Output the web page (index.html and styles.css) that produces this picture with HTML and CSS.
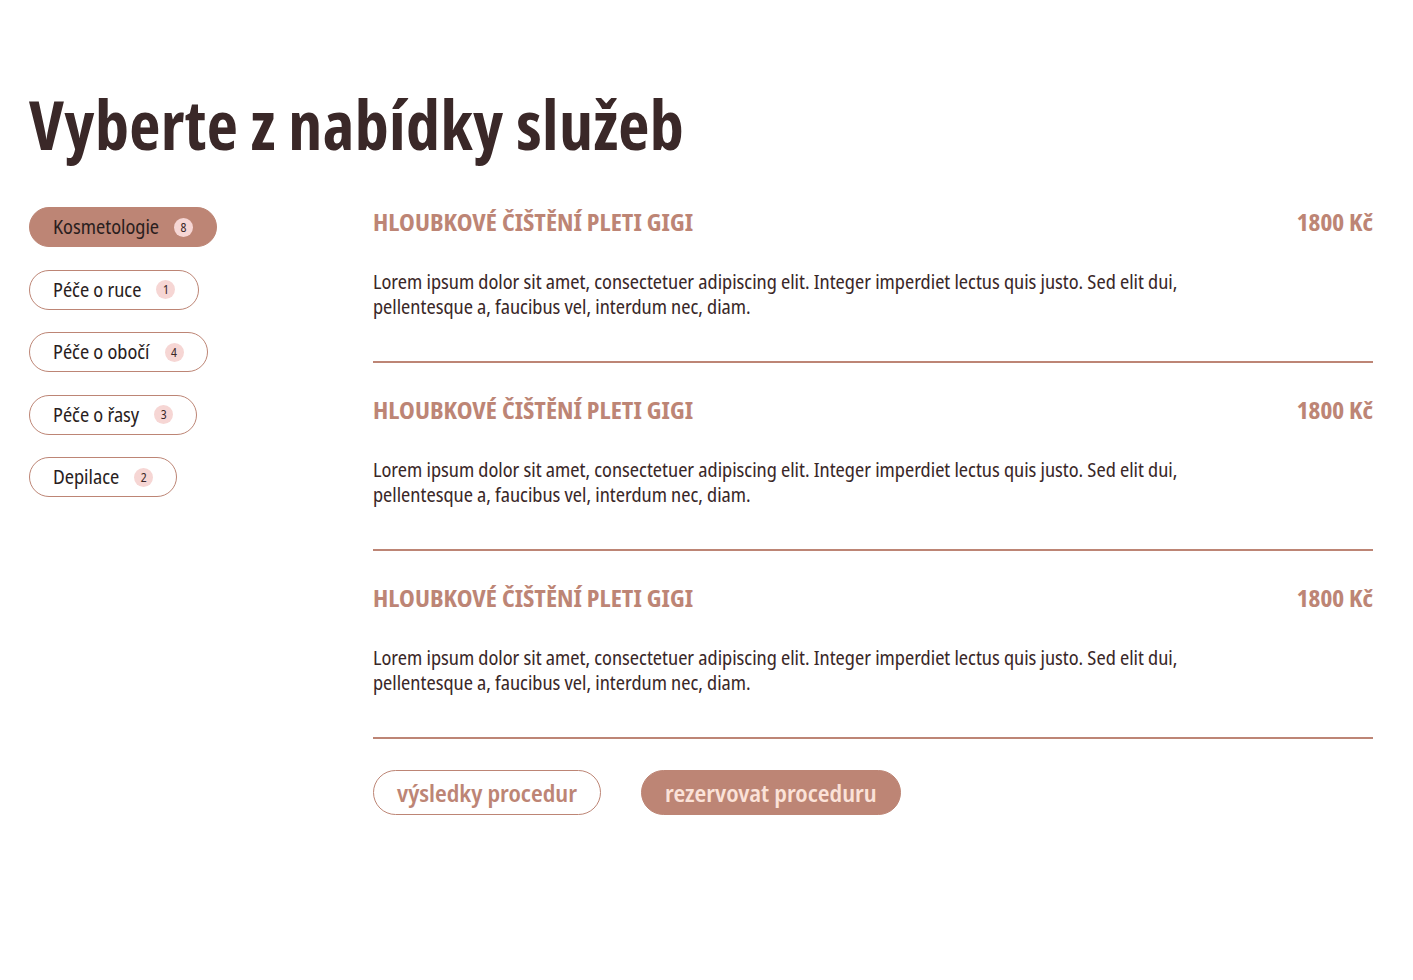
FILE: index.html
```html
<!DOCTYPE html>
<html lang="cs">
<head>
<meta charset="utf-8">
<title>Vyberte z nabídky služeb</title>
<link rel="stylesheet" href="styles.css">
</head>
<body>
<div class="page">
  <h1 class="title">Vyberte z nabídky služeb</h1>
  <div class="layout">
    <nav class="sidebar">
      <a class="pill active">Kosmetologie <span class="badge">8</span></a>
      <a class="pill">Péče o ruce <span class="badge">1</span></a>
      <a class="pill">Péče o obočí <span class="badge">4</span></a>
      <a class="pill">Péče o řasy <span class="badge">3</span></a>
      <a class="pill">Depilace <span class="badge">2</span></a>
    </nav>
    <main class="content">
      <section class="service">
        <div class="service-head">
          <h2 class="service-name">HLOUBKOVÉ ČIŠTĚNÍ PLETI GIGI</h2>
          <span class="price">1800 Kč</span>
        </div>
        <p class="desc">Lorem ipsum dolor sit amet, consectetuer adipiscing elit. Integer imperdiet lectus quis justo. Sed elit dui, pellentesque a, faucibus vel, interdum nec, diam.</p>
      </section>
      <section class="service">
        <div class="service-head">
          <h2 class="service-name">HLOUBKOVÉ ČIŠTĚNÍ PLETI GIGI</h2>
          <span class="price">1800 Kč</span>
        </div>
        <p class="desc">Lorem ipsum dolor sit amet, consectetuer adipiscing elit. Integer imperdiet lectus quis justo. Sed elit dui, pellentesque a, faucibus vel, interdum nec, diam.</p>
      </section>
      <section class="service">
        <div class="service-head">
          <h2 class="service-name">HLOUBKOVÉ ČIŠTĚNÍ PLETI GIGI</h2>
          <span class="price">1800 Kč</span>
        </div>
        <p class="desc">Lorem ipsum dolor sit amet, consectetuer adipiscing elit. Integer imperdiet lectus quis justo. Sed elit dui, pellentesque a, faucibus vel, interdum nec, diam.</p>
      </section>
      <div class="actions">
        <a class="btn btn-outline">výsledky procedur</a>
        <a class="btn btn-fill">rezervovat proceduru</a>
      </div>
    </main>
  </div>
</div>
</body>
</html>
```

FILE: styles.css
```css
* { box-sizing: border-box; }
body {
  margin: 0;
  background: #fff;
  font-family: "Noto Sans Display", "Noto Sans", sans-serif;
  font-stretch: 75%;
  color: #3a2828;
}
.page {
  padding: 86px 40px 0 29px;
}
.title {
  margin: 0;
  font-family: "Open Sans", "Noto Sans", sans-serif;
  font-size: 68px;
  line-height: 76px;
  font-weight: 700;
  font-stretch: 75%;
  letter-spacing: 0.4px;
  color: #3a2828;
}
.layout {
  display: grid;
  grid-template-columns: 344px 1fr;
  margin-top: 45px;
}
.sidebar {
  display: flex;
  flex-direction: column;
  align-items: flex-start;
  gap: 22.5px;
}
.pill {
  display: inline-flex;
  align-items: center;
  height: 40px;
  padding: 0 23px 0 23px;
  border: 1px solid #bd8575;
  border-radius: 20px;
  font-size: 19px;
  color: #2a1e1e;
  gap: 15px;
}
.pill.active {
  background: #bd8575;
}
.badge {
  display: inline-flex;
  align-items: center;
  justify-content: center;
  width: 19px;
  height: 19px;
  border-radius: 50%;
  background: #f6d6d4;
  font-size: 12px;
  color: #3a2828;
}
.service {
  border-bottom: 2px solid #bd8575;
  padding: 0 0 41px;
  margin-bottom: 32px;
}
.service-head {
  display: flex;
  justify-content: space-between;
  align-items: baseline;
  height: 33px;
  margin-top: -1px;
}
.service-name, .price {
  margin: 0;
  font-size: 23px;
  font-weight: 700;
  color: #bd8575;
}
.desc {
  margin: 31px 0 0;
  max-width: 810px;
  font-size: 19px;
  line-height: 25px;
  color: #3a2828;
}
.actions {
  display: flex;
  gap: 40px;
  margin-top: -1px;
}
.btn {
  display: inline-flex;
  align-items: center;
  height: 45px;
  padding: 0 23px;
  border: 1px solid #bd8575;
  border-radius: 23px;
  font-size: 23px;
  font-weight: 600;
}
.btn-outline { color: #bd8575; }
.btn-fill { background: #bd8575; color: #fbe2d8; }
```
